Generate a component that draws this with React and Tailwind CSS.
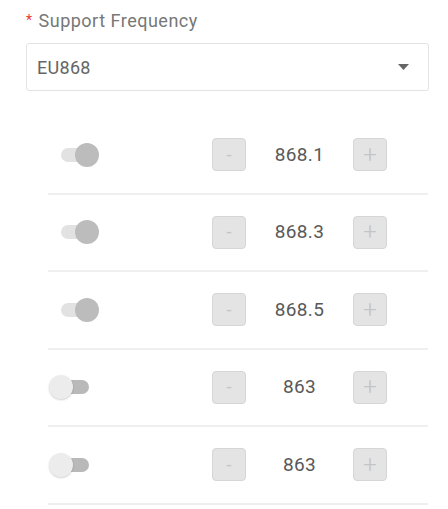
import { useState } from "react";

const initialRows = [
  { id: 1, enabled: true, value: "868.1" },
  { id: 2, enabled: true, value: "868.3" },
  { id: 3, enabled: true, value: "868.5" },
  { id: 4, enabled: false, value: "863" },
  { id: 5, enabled: false, value: "863" },
];

function Toggle({ on }) {
  return (
    <div className="relative h-6 w-[52px]">
      <div
        className={`absolute left-[12px] top-[5px] h-[14px] w-[28px] rounded-full ${on ? "bg-[#e2e2e2]" : "bg-[#b9b9b9]"}`}
      />
      <div
        className={`absolute top-0 h-6 w-6 rounded-full ${
          on ? "left-[26px] bg-[#bcbcbc]" : "left-0 bg-[#ececec] shadow-[0_1px_2px_rgba(0,0,0,0.18)]"
        }`}
      />
    </div>
  );
}

function StepButton({ children, big }) {
  return (
    <button
      type="button"
      className={`flex h-[33px] w-[34px] items-center justify-center rounded-[4px] border border-[#d6d6d6] bg-[#e4e4e4] leading-none text-[#c4c4c4] ${
        big ? "text-[24px] font-light" : "text-[18px]"
      }`}
    >
      {children}
    </button>
  );
}

export default function App() {
  const [rows] = useState(initialRows);

  return (
    <main className="min-h-screen bg-white pl-[26px] pt-[9px] font-['Roboto',sans-serif]">
      <div className="w-[403px]">
        <label className="flex h-[22px] items-center text-[18px] tracking-[0.5px] text-[#777]">
          <span className="mr-[6px] text-[14px] text-[#e53935]">*</span>
          Support Frequency
        </label>

        <div className="mt-[12px] flex h-[48px] items-center justify-between rounded-[3px] border border-[#e3e3e3] px-[10px]">
          <span className="text-[18px] tracking-[0.3px] text-[#666]">EU868</span>
          <svg width="11" height="6" viewBox="0 0 11 6" className="mr-[9px]">
            <path d="M0 0 L11 0 L5.5 6 Z" fill="#666" />
          </svg>
        </div>

        <div className="ml-[22px] mt-[26px] w-[380px]">
          {rows.map((row) => (
            <div key={row.id} className="flex h-[77.5px] items-center border-b-2 border-[#efefef]">
              <div className="w-[164px] pl-[1px]">
                <Toggle on={row.enabled} />
              </div>
              <StepButton>-</StepButton>
              <span className="w-[107px] text-center text-[19px] tracking-[0.4px] text-[#595959]">{row.value}</span>
              <StepButton big>+</StepButton>
            </div>
          ))}
        </div>
      </div>
    </main>
  );
}
